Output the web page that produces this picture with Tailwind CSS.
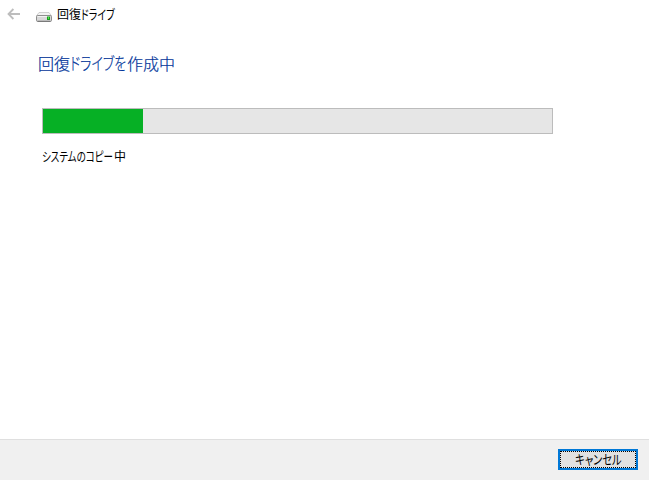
<!DOCTYPE html>
<html lang="ja">
<head>
    <meta charset="UTF-8">
    <meta name="viewport" content="width=device-width, initial-scale=1.0">
    <title>回復ドライブ</title>
    <script src="https://cdn.jsdelivr.net/npm/@tailwindcss/browser@4"></script>
</head>
<body class="bg-white text-black text-[12px] font-['Noto_Sans_CJK_JP',sans-serif]">
    <div class="w-[649px] h-[480px] flex flex-col overflow-hidden">
        <!-- タイトルバー -->
        <header class="h-[30px] flex items-center pl-[7px]">
            <svg class="w-[14px] h-[12px] -mt-[2px]" viewBox="0 0 14 12" fill="none" stroke="#bdbdbd" stroke-width="1.8">
                <path d="M6.4 1L1.5 6L6.4 11M1.8 6H13"/>
            </svg>
            <svg class="w-[16px] h-[10px] ml-[15px] mt-[4px]" viewBox="0 0 16 10">
                <path d="M3 .5H13L15.6 4H.4Z" fill="#f2f2f2" stroke="#c4c4c4" stroke-width=".8"/>
                <rect x=".5" y="3.5" width="15" height="6" rx="1.2" fill="#d8d8d8" stroke="#8e8e8e"/>
                <path d="M1.5 4.5H14" stroke="#f2f2f2"/>
                <path d="M1.5 9.2H14.5" stroke="#6a6a6a" stroke-width=".8"/>
                <rect x="11" y="4.5" width="3" height="3.5" fill="#169b22"/>
                <rect x="12" y="5" width="1" height="2" fill="#54e83f"/>
            </svg>
            <h1 class="flex ml-[5px] -mt-[2px] leading-[18px] whitespace-nowrap">
                <span class="w-[24px]">回復</span>
                <span class="w-[34px] text-[13px]"><span class="inline-block origin-left scale-x-[.76] [font-feature-settings:'palt']">ドライブ</span></span>
            </h1>
        </header>

        <!-- 進行状況 -->
        <main class="flex-1 pl-[38px]">
            <h2 class="flex mt-[21px] h-[24px] leading-[24px] text-[16px] font-light text-[#003399] [-webkit-text-stroke:0.2px_#003399] whitespace-nowrap">
                <span class="w-[32px]">回復</span>
                <span class="w-[57px] text-[17px]"><span class="inline-block origin-left scale-x-[.76] [font-feature-settings:'palt']">ドライブを</span></span>
                <span>作成中</span>
            </h2>
            <div class="ml-[4px] mt-[33px] w-[511px] h-[26px] bg-[#e6e6e6] border border-[#bcbcbc]">
                <div class="h-full bg-[#06b025]" style="width: 100px"></div>
            </div>
            <p class="flex ml-[4px] mt-[13px] leading-[18px] whitespace-nowrap">
                <span class="w-[72px] text-[13px]"><span class="inline-block origin-left scale-x-[.73] [font-feature-settings:'palt']">システムのコピー</span></span>
                <span>中</span>
            </p>
        </main>

        <!-- フッター -->
        <footer class="h-[41px] bg-[#f0f0f0] border-t border-[#dfdfdf] flex justify-end pt-[9px] pr-[11px]">
            <button class="w-[80px] h-[21px] p-0 bg-[#e1e1e1] border-2 border-[#0078d7] text-[13px]">
                <span class="flex w-full h-full items-center justify-center border border-dotted border-black whitespace-nowrap">
                    <span class="-mt-[2px] scale-x-[.79] [font-feature-settings:'palt']">キャンセル</span>
                </span>
            </button>
        </footer>
    </div>
</body>
</html>
